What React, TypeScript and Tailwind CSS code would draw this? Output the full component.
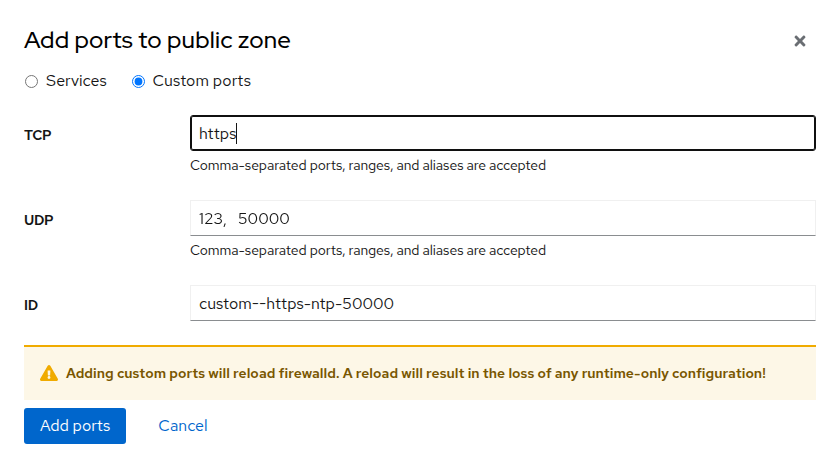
import { useState } from 'react';
import { FaTimes, FaExclamationTriangle } from 'react-icons/fa';

type FieldProps = {
  id: string;
  label: string;
  value: string;
  onChange: (value: string) => void;
  help?: string;
  autoFocus?: boolean;
};

function Field({ id, label, value, onChange, help, autoFocus }: FieldProps) {
  return (
    <div className="grid grid-cols-[150px_1fr] gap-x-4">
      <label htmlFor={id} className="pt-[10px] text-sm leading-[21px] font-semibold tracking-[-0.3px]">
        {label}
      </label>
      <div className="relative">
        <input
          id={id}
          autoFocus={autoFocus}
          value={value}
          onChange={(event) => onChange(event.target.value)}
          className="block h-9 w-full border border-[#f0f0f0] border-b-[#8a8d90] bg-white px-2 text-base leading-6 whitespace-pre text-[#151515] caret-transparent outline-none focus:rounded-[3px] focus:border-[#101010] focus:ring-1 focus:ring-[#101010] focus:ring-inset"
        />
        {/* Text cursor after the value of the focused field */}
        {autoFocus && (
          <div className="pointer-events-none absolute top-2 left-[9px] flex h-[21px]">
            <span className="invisible whitespace-pre">{value}</span>
            <span className="w-px bg-[#151515]" />
          </div>
        )}
        {help && <div className="mt-1 text-sm leading-[21px] tracking-[-0.105px]">{help}</div>}
      </div>
    </div>
  );
}

export default function App() {
  const [mode, setMode] = useState('ports');
  const [tcp, setTcp] = useState('https');
  const [udp, setUdp] = useState('123,   50000');
  const [id, setId] = useState('custom--https-ntp-50000');

  return (
    <main
      role="dialog"
      className="h-[468px] w-[840px] bg-white px-6 pt-6 font-['Red_Hat_Text','Inter',sans-serif] text-base text-[#151515]"
    >
      <header className="flex h-8 items-center justify-between">
        <h1 className="mb-px font-['Red_Hat_Display','Red_Hat_Text','Inter',sans-serif] text-2xl leading-[31px] font-medium tracking-[0.2px] text-black">
          Add ports to public zone
        </h1>
        <button aria-label="Close" className="mt-0.5 mr-2 text-[#6a6e73]">
          <FaTimes className="size-4" />
        </button>
      </header>

      <div className="mt-[13px] ml-px flex h-6 items-center gap-[25px]">
        <label className="flex items-center gap-2">
          <input
            type="radio"
            name="mode"
            className="size-[13px]"
            checked={mode === 'services'}
            onChange={() => setMode('services')}
          />
          Services
        </label>
        <label className="flex items-center gap-2">
          <input
            type="radio"
            name="mode"
            className="size-[13px]"
            checked={mode === 'ports'}
            onChange={() => setMode('ports')}
          />
          <span className="tracking-[0.08px]">Custom ports</span>
        </label>
      </div>

      <form className="mt-[22px] flex flex-col gap-6">
        <Field id="tcp" label="TCP" value={tcp} onChange={setTcp} autoFocus help="Comma-separated ports, ranges, and aliases are accepted" />
        <Field id="udp" label="UDP" value={udp} onChange={setUdp} help="Comma-separated ports, ranges, and aliases are accepted" />
        <Field id="id" label="ID" value={id} onChange={setId} />
      </form>

      <div className="mt-6 flex h-[55px] items-center border-t-2 border-[#f0ab00] bg-[#fdf7e7] px-4 pb-px text-sm text-[#795600]">
        <FaExclamationTriangle className="mr-2 size-[18px] text-[#f0ab00]" />
        <h4 className="font-semibold tracking-[0.04px]">
          Adding custom ports will reload firewalld. A reload will result in the loss of any runtime-only configuration!
        </h4>
      </div>

      <footer className="mt-2 flex gap-4">
        <button className="h-9 rounded-[3px] bg-[#0066cc] px-4 text-white">Add ports</button>
        <button className="h-9 px-4 text-[#0066cc]">Cancel</button>
      </footer>
    </main>
  );
}
